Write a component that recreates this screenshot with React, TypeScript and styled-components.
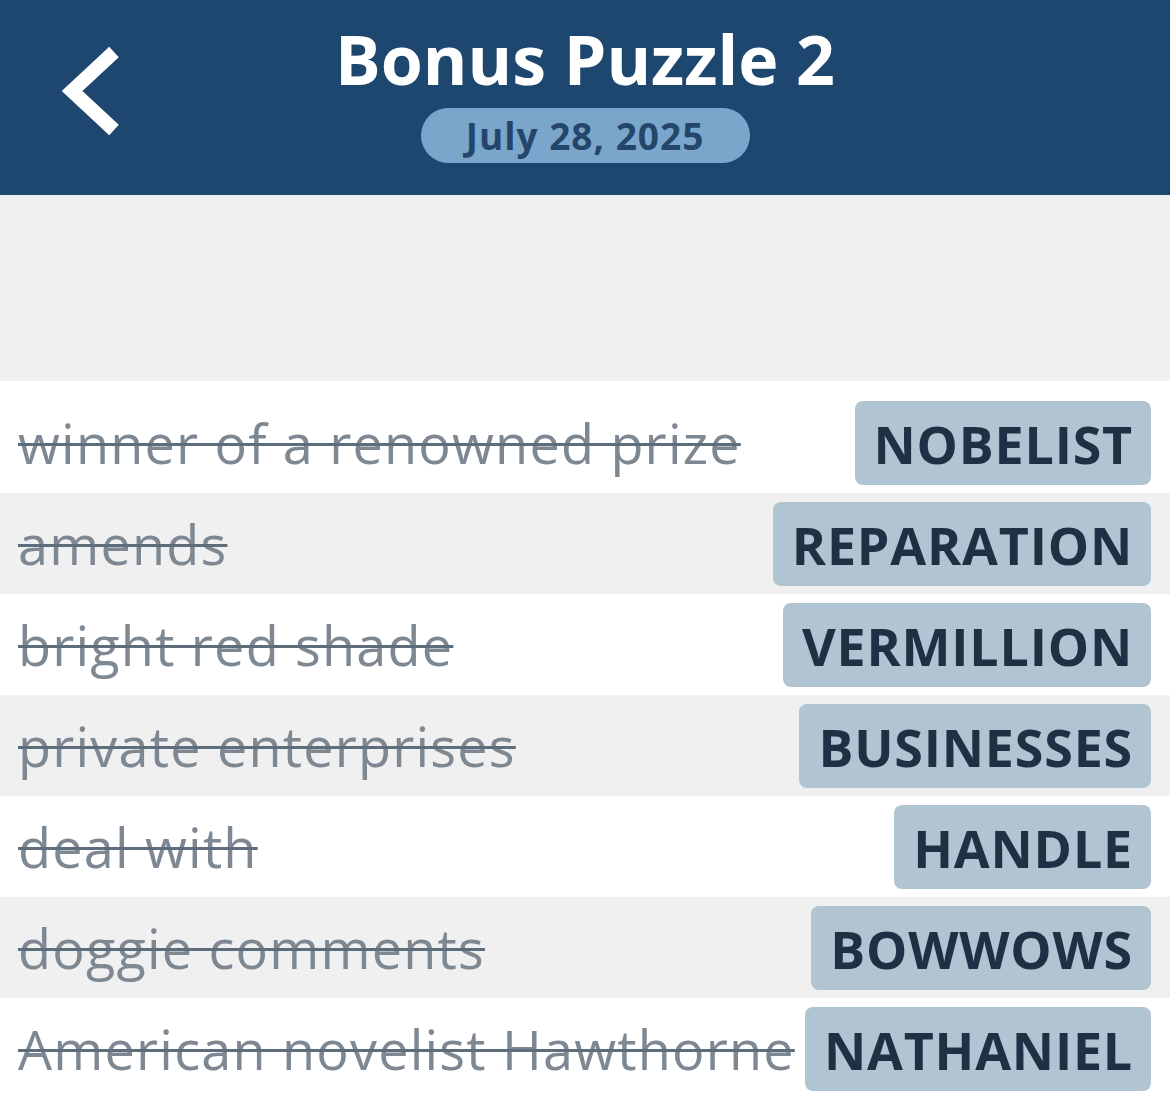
import React from 'react'
import styled, {createGlobalStyle} from 'styled-components'

const clues = [
  {clue: 'winner of a renowned prize', answer: 'NOBELIST'},
  {clue: 'amends', answer: 'REPARATION'},
  {clue: 'bright red shade', answer: 'VERMILLION'},
  {clue: 'private enterprises', answer: 'BUSINESSES'},
  {clue: 'deal with', answer: 'HANDLE'},
  {clue: 'doggie comments', answer: 'BOWWOWS'},
  {clue: 'American novelist Hawthorne', answer: 'NATHANIEL'},
]

const GlobalStyle = createGlobalStyle`
  html, body {
    margin: 0;
    padding: 0;
    background: #ffffff;
    font-family: "Open Sans", "Noto Sans", sans-serif;
  }
`

const App = () => {
  return (
    <>
      <GlobalStyle />
      <Page>
        <Header>
          <BackButton aria-label="Back">
            <svg width="60" height="90" viewBox="0 0 60 90">
              <path
                d="M52 6 L10 45 L52 84"
                fill="none"
                stroke="#ffffff"
                strokeWidth="14"
              />
            </svg>
          </BackButton>
          <TitleBlock>
            <Title>Bonus Puzzle 2</Title>
            <DatePill>July 28, 2025</DatePill>
          </TitleBlock>
          <div />
        </Header>
        <Spacer />
        <List>
          {clues.map((c, i) => (
            <Row key={c.answer} $shaded={i % 2 === 1}>
              <Clue>{c.clue}</Clue>
              <Answer>{c.answer}</Answer>
            </Row>
          ))}
        </List>
      </Page>
    </>
  )
}

export default App

const Page = styled.div`
  width: 1170px;
  min-height: 1094px;
  background: #ffffff;
  overflow: hidden;
`

const Header = styled.header`
  height: 195px;
  background: #1e476f;
  display: grid;
  grid-template-columns: 1fr auto 1fr;
  align-items: center;
`

const BackButton = styled.button`
  justify-self: start;
  margin-left: 62px;
  margin-top: -14px;
  padding: 0;
  border: none;
  background: none;
  display: flex;
  cursor: pointer;
`

const TitleBlock = styled.div`
  display: flex;
  flex-direction: column;
  align-items: center;
  margin-top: -14px;
`

const Title = styled.h1`
  margin: 0;
  position: relative;
  top: -2px;
  color: #ffffff;
  font-size: 68px;
  font-weight: 700;
  line-height: 84px;
`

const DatePill = styled.div`
  margin-top: 5px;
  width: 329px;
  height: 55px;
  border-radius: 28px;
  background: #7ba6cc;
  color: #24466b;
  font-size: 37px;
  font-weight: 700;
  letter-spacing: 1px;
  display: flex;
  align-items: center;
  justify-content: center;
`

const Spacer = styled.div`
  height: 186px;
  background: #f0f0f0;
`

const List = styled.div`
  padding-top: 11px;
  background: #ffffff;
`

const Row = styled.div<{$shaded: boolean}>`
  height: 101px;
  box-sizing: border-box;
  padding: 0 19px 0 18px;
  display: flex;
  align-items: center;
  justify-content: space-between;
  gap: 10px;
  background: ${(p) => (p.$shaded ? '#f0f0f0' : 'transparent')};
`

const Clue = styled.span`
  min-width: 0;
  color: #7e8893;
  font-size: 54px;
  letter-spacing: 1.2px;
  white-space: nowrap;
  text-decoration: line-through;
  text-decoration-color: #5e6d7b;
  text-decoration-thickness: 3px;
`

const Answer = styled.span`
  flex-shrink: 0;
  height: 84px;
  box-sizing: border-box;
  padding: 0 18px 0 19px;
  border-radius: 8px;
  background: #b1c4d1;
  color: #1e3044;
  font-size: 52px;
  font-weight: 700;
  letter-spacing: 0.8px;
  display: flex;
  align-items: center;
  white-space: nowrap;
  margin-top: 1px;
`
